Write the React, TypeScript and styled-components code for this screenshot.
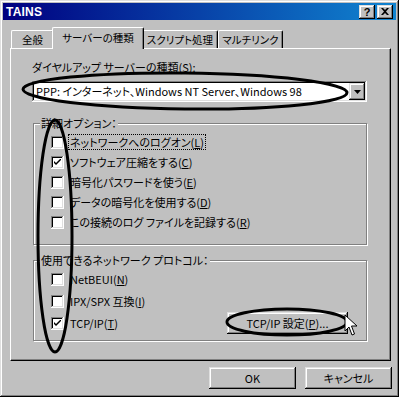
import React from 'react';
import styled, { createGlobalStyle } from 'styled-components';

const GlobalStyle = createGlobalStyle`
  html, body {
    margin: 0;
    padding: 0;
    background: #c0c0c0;
  }
  body {
    font-family: "Noto Sans CJK JP", "Liberation Sans", sans-serif;
    font-size: 11px;
    font-feature-settings: "palt";
    color: #000;
  }
`;

const raised = `
  box-shadow: inset -1px -1px #000, inset 1px 1px #dfdfdf, inset -2px -2px #808080, inset 2px 2px #fff;
`;

const sunken = `
  box-shadow: inset -1px -1px #fff, inset 1px 1px #808080, inset -2px -2px #dfdfdf, inset 2px 2px #000;
`;

const Window = styled.div`
  position: relative;
  width: 399px;
  height: 397px;
  box-sizing: border-box;
  padding: 3px;
  background: #c0c0c0;
  ${raised}
  display: flex;
  flex-direction: column;
`;

const TitleBar = styled.div`
  height: 17px;
  display: flex;
  align-items: center;
  justify-content: space-between;
  padding: 0 3px 0 3px;
  background: linear-gradient(90deg, #000080 0%, #1084d0 100%);
`;

const Title = styled.span`
  font-family: "Liberation Sans", Arial, sans-serif;
  font-weight: bold;
  font-size: 12px;
  color: #fff;
  letter-spacing: 0.2px;
`;

const TitleButtons = styled.div`
  display: flex;
  gap: 2px;
`;

const TitleButton = styled.div`
  width: 16px;
  height: 14px;
  background: #c0c0c0;
  ${raised}
  display: flex;
  align-items: center;
  justify-content: center;
  font-family: "Liberation Sans", Arial, sans-serif;
  font-weight: bold;
  font-size: 11px;
  line-height: 14px;
`;

const TabStrip = styled.div`
  display: flex;
  align-items: flex-end;
  height: 21px;
  margin-top: 7px;
  padding-left: 8px;
  position: relative;
  z-index: 1;
`;

const Tab = styled.div<{ $active?: boolean; $w: number }>`
  width: ${(p) => p.$w}px;
  height: ${(p) => (p.$active ? 22 : 18)}px;
  box-sizing: border-box;
  padding-top: ${(p) => (p.$active ? 2 : 1)}px;
  margin: ${(p) => (p.$active ? '0 -2px -1px -2px' : '0')};
  background: #c0c0c0;
  border-top: 1px solid #fff;
  border-left: 1px solid #fff;
  border-right: 1px solid #000;
  border-radius: 2px 2px 0 0;
  box-shadow: inset -1px 0 #808080;
  font-size: 10.5px;
  line-height: 15px;
  text-align: center;
  white-space: nowrap;
  position: relative;
  z-index: ${(p) => (p.$active ? 2 : 1)};
`;

const Panel = styled.div`
  margin: 0 5px 0 7px;
  height: 313px;
  box-sizing: border-box;
  border-top: 1px solid #fff;
  border-left: 1px solid #fff;
  border-right: 1px solid #000;
  border-bottom: 1px solid #000;
  box-shadow: inset -1px -1px #808080;
  padding: 11px 23px 0 21px;
  display: flex;
  flex-direction: column;
`;

const FieldLabel = styled.div`
  line-height: 14px;
  height: 14px;
`;

const Combo = styled.div`
  margin-top: 7px;
  height: 21px;
  box-sizing: border-box;
  background: #fff;
  ${sunken}
  display: flex;
  align-items: center;
  padding: 2px 2px 2px 4px;
`;

const ComboText = styled.span`
  flex: 1;
  line-height: 15px;
  white-space: nowrap;
`;

const DropButton = styled.div`
  width: 16px;
  height: 17px;
  box-sizing: border-box;
  background: #c0c0c0;
  ${raised}
  display: flex;
  align-items: center;
  justify-content: center;
`;

const Spacer = styled.div<{ $h: number }>`
  height: ${(p) => p.$h}px;
  flex: none;
`;

const Group = styled.div<{ $h: number; $top: number }>`
  position: relative;
  height: ${(p) => p.$h}px;
  box-sizing: border-box;
  margin-left: 1px;
  border: 1px solid #808080;
  box-shadow: inset 1px 1px #fff, 1px 1px #fff;
  padding: ${(p) => p.$top}px 18px 0 17px;
  display: flex;
  flex-direction: column;
`;

const GroupLegend = styled.span`
  position: absolute;
  top: -8px;
  left: 6px;
  padding: 0 1px;
  background: #c0c0c0;
  line-height: 14px;
`;

const Row = styled.div<{ $h?: number }>`
  display: flex;
  align-items: center;
  height: ${(p) => p.$h ?? 20}px;
  gap: 4px;
`;

const Box = styled.div`
  width: 13px;
  height: 13px;
  flex: none;
  box-sizing: border-box;
  background: #fff;
  ${sunken}
  display: flex;
  align-items: center;
  justify-content: center;
`;

const OptionText = styled.span<{ $focus?: boolean }>`
  line-height: 14px;
  padding: 0 1px;
  white-space: nowrap;
  border: 1px ${(p) => (p.$focus ? 'dotted #000' : 'solid transparent')};
`;

const U = styled.span`
  text-decoration: underline;
  text-underline-offset: 1px;
`;

const LastRow = styled.div`
  display: flex;
  align-items: center;
  justify-content: space-between;
`;

const PushButton = styled.div<{ $w: number }>`
  width: ${(p) => p.$w}px;
  height: 22px;
  box-sizing: border-box;
  background: #c0c0c0;
  ${raised}
  display: flex;
  align-items: center;
  justify-content: center;
  line-height: 14px;
  white-space: nowrap;
`;

const Footer = styled.div`
  display: flex;
  justify-content: flex-end;
  gap: 9px;
  padding: 6px 4px 0 0;
`;

const Overlay = styled.svg`
  position: absolute;
  left: 0;
  top: 0;
  pointer-events: none;
`;

const Check = ({ on }: { on?: boolean }) => (
  <Box>
    {on && (
      <svg width="7" height="7" viewBox="0 0 7 7">
        <path d="M0 2 L0 4 L2 6 L7 1 L7 -1 L2 4 Z" fill="#000" />
      </svg>
    )}
  </Box>
);

type Opt = { label: string; mnemonic: string; on?: boolean; focus?: boolean; h?: number };

const details: Opt[] = [
  { label: 'ネットワークへのログオン', mnemonic: 'L', focus: true },
  { label: 'ソフトウェア圧縮をする', mnemonic: 'C', on: true },
  { label: '暗号化パスワードを使う', mnemonic: 'E' },
  { label: 'データの暗号化を使用する', mnemonic: 'D' },
  { label: 'この接続のログ ファイルを記録する', mnemonic: 'R' },
];

const Option: React.FC<Opt> = ({ label, mnemonic, on, focus, h }) => (
  <Row $h={h}>
    <Check on={on} />
    <OptionText $focus={focus}>
      {label}(<U>{mnemonic}</U>)
    </OptionText>
  </Row>
);

const App: React.FC = () => {
  return (
    <>
      <GlobalStyle />
      <Window>
        <TitleBar>
          <Title>TAINS</Title>
          <TitleButtons>
            <TitleButton>?</TitleButton>
            <TitleButton>
              <svg width="8" height="7" viewBox="0 0 8 7">
                <path d="M0 0 L2 0 L4 2 L6 0 L8 0 L5 3.5 L8 7 L6 7 L4 5 L2 7 L0 7 L3 3.5 Z" fill="#000" />
              </svg>
            </TitleButton>
          </TitleButtons>
        </TitleBar>

        <TabStrip>
          <Tab $w={43}>全般</Tab>
          <Tab $w={92} $active>
            サーバーの種類
          </Tab>
          <Tab $w={76}>スクリプト処理</Tab>
          <Tab $w={65}>マルチリンク</Tab>
        </TabStrip>

        <Panel>
          <FieldLabel>
            ダイヤルアップ サーバーの種類(<U>S</U>):
          </FieldLabel>
          <Combo>
            <ComboText>PPP: インターネット、Windows NT Server、Windows 98</ComboText>
            <DropButton>
              <svg width="7" height="4" viewBox="0 0 7 4">
                <path d="M0 0 L7 0 L3.5 4 Z" fill="#000" />
              </svg>
            </DropButton>
          </Combo>

          <Spacer $h={21} />
          <Group $h={122} $top={8}>
            <GroupLegend>詳細オプション：</GroupLegend>
            {details.map((d) => (
              <Option key={d.mnemonic} {...d} />
            ))}
          </Group>

          <Spacer $h={15} />
          <Group $h={81} $top={7}>
            <GroupLegend>使用できるネットワーク プロトコル：</GroupLegend>
            <Option label="NetBEUI" mnemonic="N" h={22} />
            <Option label="IPX/SPX 互換" mnemonic="I" h={22} />
            <LastRow>
              <Option label="TCP/IP" mnemonic="T" on h={22} />
              <PushButton $w={121}>
                TCP/IP 設定(<U>P</U>)...
              </PushButton>
            </LastRow>
          </Group>
        </Panel>

        <Footer>
          <PushButton $w={87}>OK</PushButton>
          <PushButton $w={87}>キャンセル</PushButton>
        </Footer>

        <Overlay width="399" height="397" viewBox="0 0 399 397">
          <g fill="none" stroke="#000" strokeWidth="3">
            <ellipse cx="185" cy="91" rx="162" ry="18" transform="rotate(0.6 185 91)" />
            <ellipse cx="55" cy="236" rx="17" ry="116" />
            <ellipse cx="287" cy="322" rx="60" ry="13" />
          </g>
          <path
            d="M345 315 L345 331 L349 327 L352 335 L354.5 334 L351.5 326 L357 326 Z"
            fill="#fff"
            stroke="#000"
            strokeWidth="1"
          />
        </Overlay>
      </Window>
    </>
  );
};

export default App;
